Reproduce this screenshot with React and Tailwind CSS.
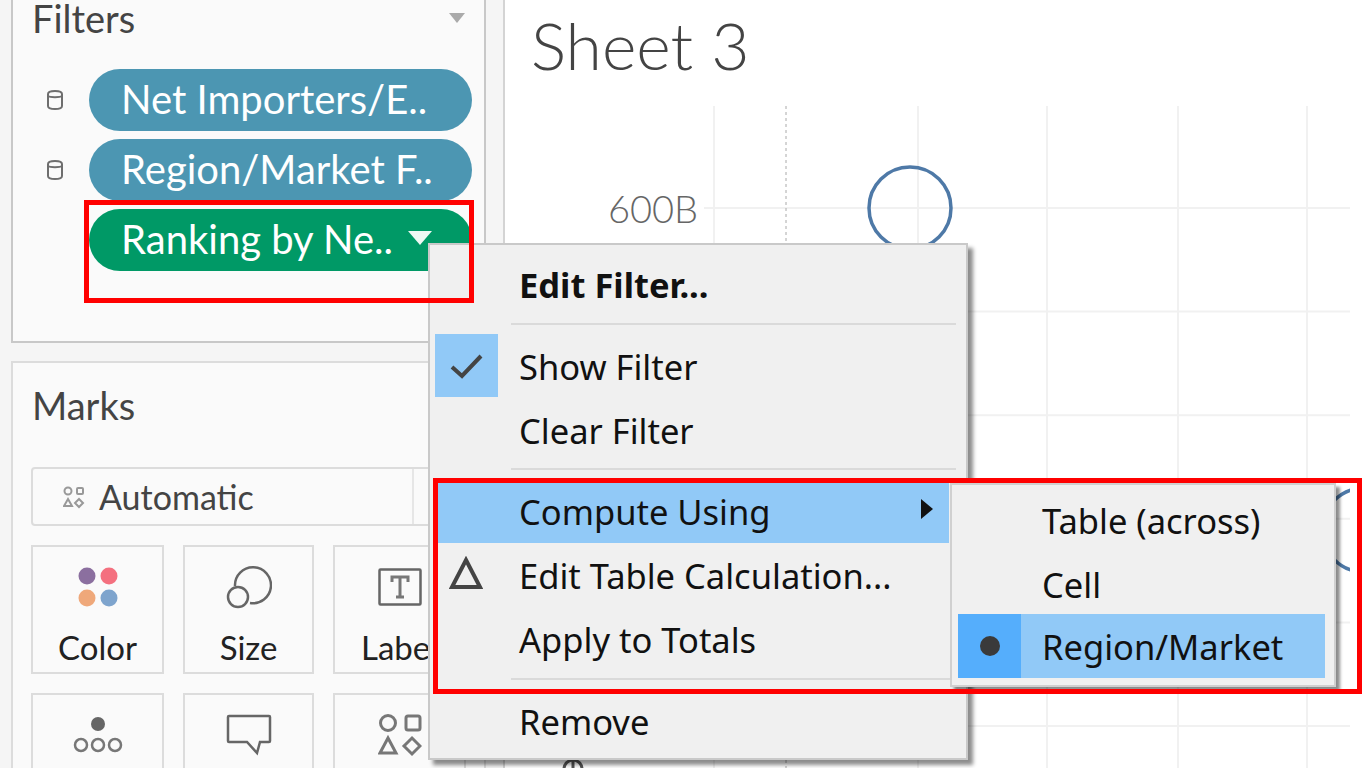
import React from "react";

const seg = { fontFamily: '"Noto Sans","Open Sans",sans-serif' };
const lato = { fontFamily: 'Lato,"Open Sans",sans-serif' };

function Cyl() {
  return (
    <svg width="18" height="22" viewBox="0 0 18 22" fill="none" stroke="#6e6e6e" strokeWidth="2">
      <path d="M2 5c0-2 2-3 7-3s7 1 7 3v12c0 2-2 3-7 3s-7-1-7-3z" />
      <path d="M2 7c2 1.500 12 1.500 14 0" />
    </svg>
  );
}

function Pill({ green, children, caret }) {
  return (
    <div className={`flex h-[62px] w-[383px] items-center rounded-full pl-8 text-[40px] text-white ${green ? "bg-[#009966]" : "bg-[#4c96b2]"}`} style={lato}>
      <span className="whitespace-nowrap pb-[2px]">{children}</span>
      {caret}
    </div>
  );
}

function Card({ label, icon, narrow }) {
  return (
    <div className={`flex h-[129px] shrink-0 flex-col items-center border-2 border-[#dcdcdc] pt-[18px] ${narrow ? "w-[131px]" : "w-[133px]"}`}>
      <div className="flex h-[44px] items-center justify-center">{icon}</div>
      <span className="mt-[18px] whitespace-nowrap text-[33px] leading-[40px] text-[#222]" style={lato}>{label}</span>
    </div>
  );
}

function MenuItem({ children, bold, left, arrow, hi }) {
  return (
    <div className={`relative flex h-[64px] shrink-0 items-center pl-[89px] text-[34.5px] text-[#111] ${bold ? "font-bold" : ""}`} style={seg}>
      {hi && <div className="absolute inset-y-[2px] left-[7px] right-[17px] bg-[#91c9f7]" />}
      {left}
      <span className="relative whitespace-nowrap pb-[2px]">{children}</span>
      {arrow}
    </div>
  );
}

function Sep({ gap }) {
  return <div className={`ml-[81px] mr-[10px] h-[2px] shrink-0 bg-[#dadada] ${gap}`} />;
}

export default function App() {
  const ys = [0, 1, 2, 3, 4, 5];
  const xs = [714, 918, 1047, 1178, 1307];
  return (
    <div className="relative flex h-[768px] w-[1362px] overflow-hidden bg-[#f5f5f5]">
      <aside className="flex w-[503px] shrink-0 flex-col gap-[18px] pl-[11px] pr-[17px]">
        <section className="relative mt-[-20px] h-[363px] shrink-0 border-2 border-[#c8c8c8] bg-[#fafafa] px-[19px] pt-[21px]">
          <div className="flex items-center justify-between">
            <h2 className="text-[38px] font-normal leading-[30px] text-[#444]" style={lato}>Filters</h2>
            <svg width="16" height="10" viewBox="0 0 16 10"><path d="M0 0h16l-8 10z" fill="#aaa" /></svg>
          </div>
          <div className="mt-[36px] flex flex-col gap-[8px] pl-[57px]">
            <div className="relative"><span className="absolute left-[-43px] top-[20px]"><Cyl /></span><Pill>Net Importers/E..</Pill></div>
            <div className="relative"><span className="absolute left-[-43px] top-[20px]"><Cyl /></span><Pill>Region/Market F..</Pill></div>
            <Pill green caret={<svg width="24" height="14" viewBox="0 0 24 14" className="ml-[15px] mt-[-4px]"><path d="M0 0h24l-12 14z" fill="#eef8f4" /></svg>}>Ranking by Ne..</Pill>
          </div>
        </section>
        <section className="flex-1 border-2 border-b-0 border-[#dcdcdc] bg-[#fafafa] px-[18px] pt-[20px]">
          <h2 className="pl-[1px] text-[38px] font-normal leading-[44px] text-[#444]" style={lato}>Marks</h2>
          <div className="mt-[40px] flex h-[59px] w-[460px] items-center rounded border-2 border-[#dcdcdc] pl-[30px]">
            <svg width="22" height="24" viewBox="0 0 22 24" fill="none" stroke="#999" strokeWidth="2">
              <circle cx="5" cy="6" r="3.500" /><rect x="14" y="3" width="6" height="6" rx="1" />
              <path d="M5 14l4 7H1z" /><path d="M16 14l4 4-4 4-4-4z" />
            </svg>
            <span className="ml-[14px] w-[313px] text-[34px] text-[#444]" style={lato}>Automatic</span>
            <div className="h-full w-[2px] bg-[#e6e6e6]" />
          </div>
          <div className="mt-[19px] flex gap-[19px]">
            <Card label="Color" icon={
              <svg width="40" height="40" viewBox="0 0 40 40"><circle cx="9" cy="9" r="8.500" fill="#8b6f9f" /><circle cx="31" cy="9" r="8.500" fill="#f4707f" /><circle cx="9" cy="31" r="8.500" fill="#efa87a" /><circle cx="31" cy="31" r="8.500" fill="#7ea4cd" /></svg>
            } />
            <Card narrow label="Size" icon={
              <svg width="46" height="44" viewBox="0 0 46 44" fill="none" stroke="#666" strokeWidth="2.500"><path d="M9 21A18 18 0 1 1 24 38" /><circle cx="12" cy="32" r="10" /></svg>
            } />
            <Card label="Label" icon={
              <svg width="44" height="38" viewBox="0 0 44 38" fill="none"><rect x="1.500" y="1.500" width="41" height="35" rx="1" stroke="#666" strokeWidth="2.500" /><path d="M14 14V9h16v5M22 9v20M18 29h8" stroke="#777" strokeWidth="3" /></svg>
            } />
          </div>
          <div className="mt-[19px] flex gap-[19px]">
            <Card label="" icon={
              <svg width="50" height="38" viewBox="0 0 50 38" fill="none" stroke="#777" strokeWidth="2.500"><circle cx="25" cy="8" r="7" fill="#666" stroke="none" /><circle cx="8" cy="29" r="6" /><circle cx="25" cy="29" r="6" /><circle cx="42" cy="29" r="6" /></svg>
            } />
            <Card narrow label="" icon={
              <svg width="46" height="42" viewBox="0 0 46 42" fill="none" stroke="#666" strokeWidth="2.500"><path d="M3 2h40a1 1 0 0 1 1 1v24a1 1 0 0 1-1 1H34l-3 11-10-11H3a1 1 0 0 1-1-1V3a1 1 0 0 1 1-1z" /></svg>
            } />
            <Card label="" icon={
              <svg width="44" height="44" viewBox="0 0 44 44" fill="none" stroke="#777" strokeWidth="3"><circle cx="10" cy="10" r="7.500" /><rect x="28" y="3" width="14" height="14" rx="2" /><path d="M10 25l8 15H2z" /><path d="M34 25l8 8-8 8-8-8z" /></svg>
            } />
          </div>
        </section>
      </aside>

      <main className="relative flex-1 border-l-2 border-[#d4d4d4] bg-white pl-[26px]">
        <h1 className="mt-[11px] text-[66px] font-light leading-[68px] text-[#444]" style={lato}>Sheet 3</h1>
        <svg className="absolute left-0 top-0" width="845" height="768" viewBox="505 0 845 768" fill="none">
          {ys.map((i) => <line key={i} x1="704" x2="1350" y1={208 + i * 103.600} y2={208 + i * 103.600} stroke="#f1f1f1" strokeWidth="2" />)}
          {xs.map((x) => <line key={x} x1={x} x2={x} y1="106" y2="768" stroke="#f1f1f1" strokeWidth="2" />)}
          <line x1="786" x2="786" y1="106" y2="768" stroke="#aaa" strokeDasharray="3 3" />
          <circle cx="910" cy="208" r="41" stroke="#4e79a7" strokeWidth="3.500" />
          <circle cx="1364" cy="530" r="42" stroke="#4e79a7" strokeWidth="3.500" />
          <circle cx="573" cy="769" r="9" stroke="#555" strokeWidth="3" />
          <line x1="573" x2="573" y1="759" y2="768" stroke="#555" strokeWidth="3" />
        </svg>
        <span className="absolute left-[103px] top-[186px] text-[38px] font-light leading-[44px] text-[#666]" style={lato}>600B</span>
      </main>

      <div className="absolute left-[428px] top-[243px] flex h-[517px] w-[540px] flex-col border-2 border-[#c9c9c9] bg-[#f0f0f0] py-[9px] shadow-[5px_5px_4px_rgba(0,0,0,0.45)]">
        <MenuItem bold>Edit Filter...</MenuItem>
        <Sep gap="mt-[5px] mb-[11px]" />
        <MenuItem left={
          <div className="absolute left-[5px] top-[-2px] flex h-[63px] w-[63px] items-center justify-center bg-[#91c9f7]">
            <svg width="34" height="26" viewBox="0 0 34 26" fill="none"><path d="M2 14l10 9L31 3" stroke="#444" strokeWidth="4" /></svg>
          </div>
        }>Show Filter</MenuItem>
        <MenuItem>Clear Filter</MenuItem>
        <Sep gap="mt-[4px] mb-[11px]" />
        <MenuItem hi arrow={<svg width="12" height="20" viewBox="0 0 12 20" className="absolute right-[33px] top-[18px]"><path d="M0 0l12 10L0 20z" fill="#111" /></svg>}>Compute Using</MenuItem>
        <MenuItem left={
          <svg width="34" height="34" viewBox="0 0 34 34" fill="none" className="absolute left-[19px] top-[11px]"><path d="M17 4l14 27H3z" stroke="#444" strokeWidth="4" /></svg>
        }>Edit Table Calculation...</MenuItem>
        <MenuItem>Apply to Totals</MenuItem>
        <Sep gap="mt-[5px] mb-[11px]" />
        <MenuItem>Remove</MenuItem>
      </div>

      <div className="absolute left-[950px] top-[483px] flex h-[204px] w-[386px] flex-col border-2 border-[#d0d0d0] bg-[#f0f0f0] pt-[4px] shadow-[4px_4px_3px_rgba(0,0,0,0.45)]">
        <div className="flex h-[64px] shrink-0 items-center pl-[90px] text-[34.5px] text-[#111]" style={seg}>Table (across)</div>
        <div className="flex h-[64px] shrink-0 items-center pl-[90px] text-[34.5px] text-[#111]" style={seg}>Cell</div>
        <div className="ml-[6px] mr-[9px] mt-[-3px] flex h-[64px] shrink-0 items-center bg-[#91c9f7] text-[34.5px] text-[#111]" style={seg}>
          <div className="flex h-full w-[63px] items-center justify-center bg-[#55aefc]"><div className="h-[20px] w-[20px] rounded-full bg-[#3a3a3a]" /></div>
          <span className="ml-[21px] pt-[1px]">Region/Market</span>
        </div>
      </div>

      <div className="pointer-events-none absolute left-[84px] top-[200px] h-[103px] w-[390px] border-[5px] border-[#ff0000]" />
      <div className="pointer-events-none absolute left-[433px] top-[478px] h-[216px] w-[929px] border-[5px] border-[#ff0000]" />
    </div>
  );
}
